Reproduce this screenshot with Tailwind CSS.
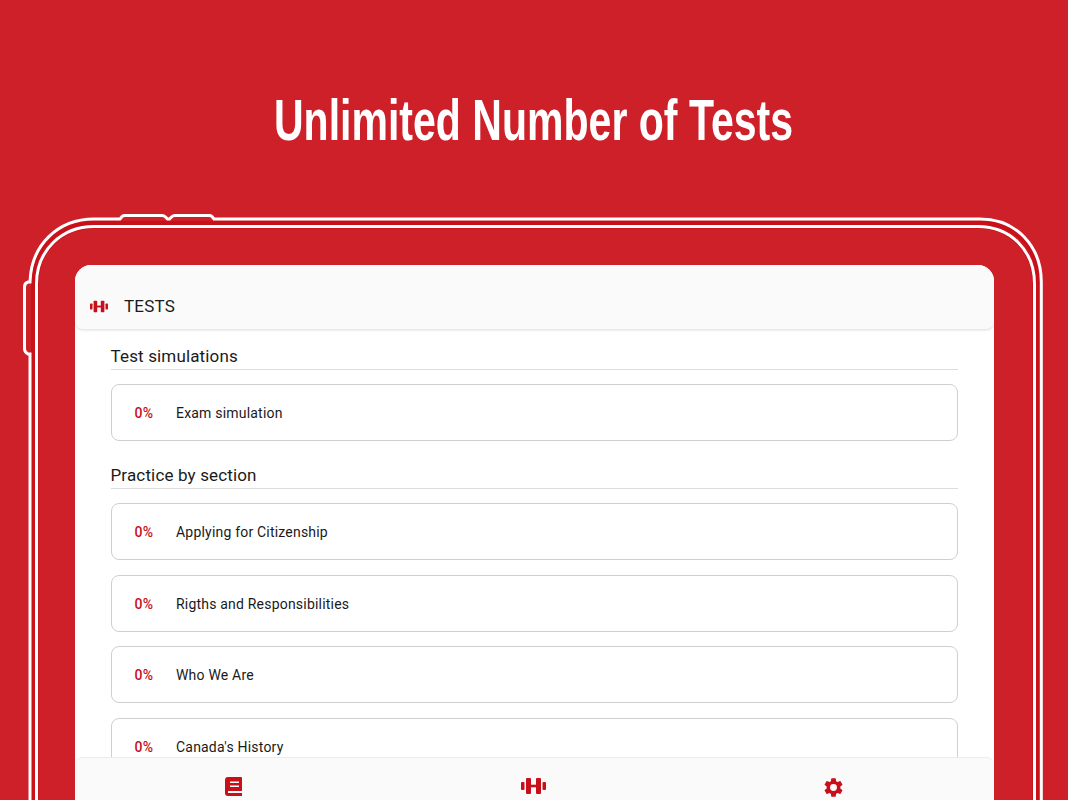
<!DOCTYPE html>
<html lang="en">
<head>
  <meta charset="UTF-8" />
  <title>Unlimited Number of Tests</title>
  <script src="https://cdn.jsdelivr.net/npm/@tailwindcss/browser@4"></script>
</head>
<body class="bg-[#ce2029] font-['Roboto',sans-serif] text-[#1a1a1a]">
  <div class="relative w-[1068px] h-[800px] overflow-hidden flex flex-col">
    <div class="h-[265px] shrink-0 pt-[84px] text-center">
      <h1 class="inline-block scale-x-[0.72] whitespace-nowrap text-white text-[57px] leading-[72px] font-bold font-['Liberation_Sans',sans-serif]">Unlimited Number of Tests</h1>
    </div>

    <!-- Tablet outline -->
    <svg class="absolute left-0 top-0" width="1068" height="800" fill="none">
      <path d="M33 800V280C33 246 60 222.700 94 222.700H980C1014 222.700 1037.800 246 1037.800 280V800" stroke="#c8101a" stroke-width="4"/>
      <path d="M36.500 800V284C36.500 250 62 226.500 94 226.500H978C1010 226.500 1034.500 250 1034.500 284V800" stroke="#c8101a" stroke-width="4.500"/>
      <path d="M30 800V354H28Q24.500 352 24.500 349V287Q24.500 283 28 282H30C31 245 58 219 94 219H120L122 216.500Q123 215.500 125 215.500H162Q164 215.500 165.500 217L167.500 219H169.500L171.500 217Q173 215.500 175 215.500H209Q211 215.500 212 216.500L214 219H980C1016 219 1041.300 246 1041.300 282V800" stroke="#fff" stroke-width="3"/>
      <path d="M36.500 800V284C36.500 250 62 226.500 94 226.500H978C1010 226.500 1034.500 250 1034.500 284V800" stroke="#fff" stroke-width="3"/>
    </svg>

    <div class="relative ml-[75px] mr-[74px] flex-1 min-h-0 flex flex-col bg-white rounded-t-[16px] overflow-hidden">
      <header class="h-[65px] shrink-0 pt-[18px] flex items-center bg-[#fafafa] rounded-b-[8px] border-b border-[#e9e9e9] shadow-[0_1px_2px_rgba(0,0,0,0.08)]">
        <svg class="ml-[15px]" width="18" height="13" viewBox="0 0 25 16" fill="#c8101a">
          <rect x="0" y="4" width="3.500" height="8" rx="1"/>
          <rect x="5" y="0" width="5" height="16" rx="1"/>
          <rect x="9" y="6.700" width="7" height="2.600"/>
          <rect x="15" y="0" width="5" height="16" rx="1"/>
          <rect x="21.500" y="4" width="3.500" height="8" rx="1"/>
        </svg>
        <span class="ml-[16px] text-[17px] leading-[24px] tracking-[0.2px] text-[#1a1a1a]">TESTS</span>
      </header>

      <main class="flex-1 min-h-0 overflow-hidden pl-[35.500px] pr-[36px] pt-[15px]">
        <h2 class="text-[17px] leading-[22px] tracking-[0.15px] border-b border-[#dcdcdc] h-[25px]">Test simulations</h2>
        <div class="mt-[14px] h-[57px] pt-px flex items-center border border-[#cfcfcf] rounded-[8px] text-sm tracking-[0.2px]">
          <span class="w-[64.500px] pl-[23px] font-medium text-[#c8101a]">0%</span><span>Exam simulation</span>
        </div>

        <h2 class="mt-[23px] text-[17px] leading-[22px] tracking-[0.15px] border-b border-[#dcdcdc] h-[25px]">Practice by section</h2>
        <div class="mt-[14px] flex flex-col gap-[14.670px]">
          <div class="h-[57px] shrink-0 pt-px flex items-center border border-[#cfcfcf] rounded-[8px] text-sm tracking-[0.2px]">
            <span class="w-[64.500px] pl-[23px] font-medium text-[#c8101a]">0%</span><span>Applying for Citizenship</span>
          </div>
          <div class="h-[57px] shrink-0 pt-px flex items-center border border-[#cfcfcf] rounded-[8px] text-sm tracking-[0.2px]">
            <span class="w-[64.500px] pl-[23px] font-medium text-[#c8101a]">0%</span><span>Rigths and Responsibilities</span>
          </div>
          <div class="h-[57px] shrink-0 pt-px flex items-center border border-[#cfcfcf] rounded-[8px] text-sm tracking-[0.2px]">
            <span class="w-[64.500px] pl-[23px] font-medium text-[#c8101a]">0%</span><span>Who We Are</span>
          </div>
          <div class="h-[57px] shrink-0 pt-px flex items-center border border-[#cfcfcf] rounded-[8px] text-sm tracking-[0.2px]">
            <span class="w-[64.500px] pl-[23px] font-medium text-[#c8101a]">0%</span><span>Canada's History</span>
          </div>
        </div>
      </main>

      <nav class="h-[43px] shrink-0 grid grid-cols-3 pl-[8px] pr-[10px] bg-[#fafafa] border-t border-[#ececec] rounded-t-[8px]">
        <div class="flex justify-center pt-[19px]">
          <svg width="17" height="19" viewBox="0 0 17 19" fill="#c8101a">
            <path d="M3 0H16Q17 0 17 1V19H3Q0 19 0 16V3Q0 0 3 0Z"/>
            <rect x="5" y="4.500" width="9" height="1.500" fill="#fafafa"/>
            <rect x="5" y="8.500" width="9" height="1.500" fill="#fafafa"/>
            <rect x="3" y="14" width="14" height="2" fill="#fafafa"/>
          </svg>
        </div>
        <div class="flex justify-center pt-[20px]">
          <svg width="25" height="16" viewBox="0 0 25 16" fill="#c8101a">
            <rect x="0" y="4" width="3.500" height="8" rx="1"/>
            <rect x="5" y="0" width="5" height="16" rx="1"/>
            <rect x="9" y="6.700" width="7" height="2.600"/>
            <rect x="15" y="0" width="5" height="16" rx="1"/>
            <rect x="21.500" y="4" width="3.500" height="8" rx="1"/>
          </svg>
        </div>
        <div class="flex justify-center pt-[18px]">
          <svg width="23" height="23" viewBox="0 0 24 24" fill="#c8101a">
            <path d="M19.140 12.940c.04-.3.06-.61.06-.94s-.02-.64-.07-.94l2.030-1.580a.49.49 0 0 0 .12-.61l-1.920-3.320a.49.49 0 0 0-.59-.22l-2.390.96a7 7 0 0 0-1.620-.94l-.36-2.540a.48.48 0 0 0-.48-.41h-3.840a.48.48 0 0 0-.47.41l-.36 2.540a7.300 7.300 0 0 0-1.620.94l-2.390-.96a.48.48 0 0 0-.59.22L2.740 8.870a.48.48 0 0 0 .12.61l2.030 1.580c-.05.3-.09.63-.09.94s.02.64.07.94l-2.030 1.580a.49.49 0 0 0-.12.61l1.920 3.320c.12.22.37.29.59.22l2.390-.96c.5.380 1.030.7 1.620.94l.36 2.540c.05.24.24.41.48.41h3.840c.24 0 .44-.17.47-.41l.36-2.540a7 7 0 0 0 1.620-.94l2.390.96c.22.080.47 0 .59-.22l1.920-3.320a.48.48 0 0 0-.12-.61l-2.010-1.580zM12 15.600A3.610 3.610 0 0 1 8.400 12 3.610 3.610 0 0 1 12 8.400a3.610 3.610 0 0 1 3.600 3.600 3.610 3.610 0 0 1-3.600 3.600z"/>
          </svg>
        </div>
      </nav>
    </div>
  </div>
</body>
</html>
